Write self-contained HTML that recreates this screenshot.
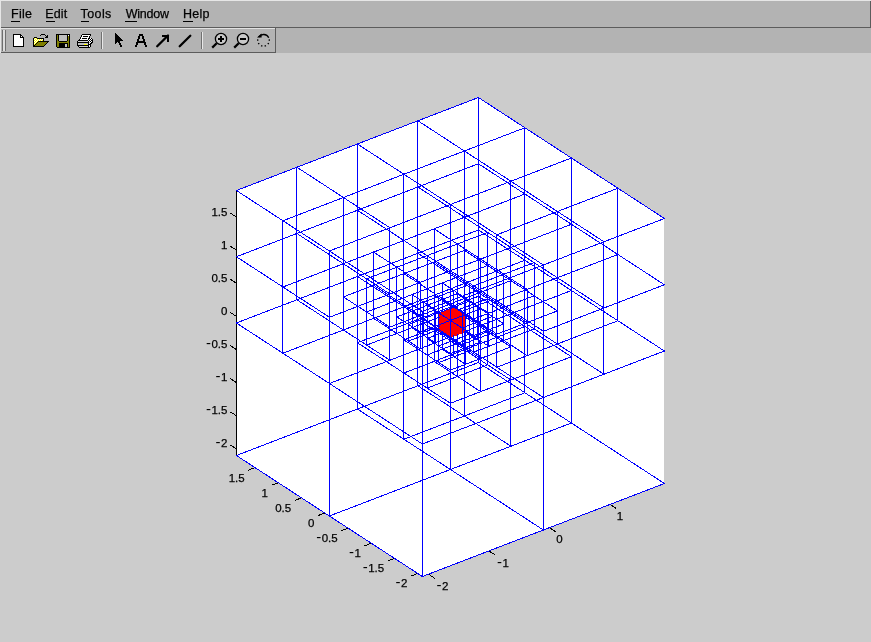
<!DOCTYPE html><html><head><meta charset="utf-8"><title>Figure</title><style>
html,body{margin:0;padding:0}
body{width:871px;height:642px;background:#cccccc;position:relative;overflow:hidden;font-family:"Liberation Sans",sans-serif}
svg{position:absolute;left:0;top:0}
.m{font-size:12.5px;fill:#000;stroke:#000;stroke-width:.25px}text{filter:grayscale(1)}.t{font-size:11.5px;fill:#000;stroke:#000;stroke-width:.25px}
</style></head><body>
<svg width="871" height="642" viewBox="0 0 871 642">
<g shape-rendering="crispEdges">
<rect x="0" y="0" width="871" height="53" fill="#b3b3b3"/>
<rect x="0" y="0" width="871" height="1" fill="#e6e6e6"/>
<rect x="0" y="0" width="1" height="53" fill="#e6e6e6"/>
<rect x="1" y="27" width="870" height="1" fill="#5c5c5c"/>
<rect x="870" y="1" width="1" height="27" fill="#5c5c5c"/>
<rect x="1" y="28" width="275" height="1" fill="#e0e0e0"/>
<rect x="1" y="52" width="275" height="1" fill="#5c5c5c"/>
<rect x="275" y="28" width="1" height="25" fill="#5c5c5c"/>
<rect x="2" y="30" width="1" height="21" fill="#6e6e6e"/>
<rect x="3" y="30" width="2" height="21" fill="#dcdcdc"/>
<rect x="5" y="30" width="1" height="21" fill="#6e6e6e"/>
<rect x="101" y="32" width="1" height="17" fill="#707070"/>
<rect x="102" y="32" width="1" height="17" fill="#e8e8e8"/>
<rect x="201" y="32" width="1" height="17" fill="#707070"/>
<rect x="202" y="32" width="1" height="17" fill="#e8e8e8"/>
<rect x="11" y="21" width="9" height="1" fill="#000"/>
<rect x="46" y="21" width="9" height="1" fill="#000"/>
<rect x="81" y="21" width="8" height="1" fill="#000"/>
<rect x="125" y="21" width="12" height="1" fill="#000"/>
<rect x="183" y="21" width="10" height="1" fill="#000"/>
<rect x="13" y="34" width="8" height="1" fill="#000"/><rect x="13" y="35" width="1" height="1" fill="#000"/><rect x="14" y="35" width="6" height="1" fill="#fff"/><rect x="20" y="35" width="2" height="1" fill="#000"/><rect x="13" y="36" width="1" height="1" fill="#000"/><rect x="14" y="36" width="6" height="1" fill="#fff"/><rect x="20" y="36" width="1" height="1" fill="#000"/><rect x="21" y="36" width="1" height="1" fill="#fff"/><rect x="22" y="36" width="1" height="1" fill="#000"/><rect x="13" y="37" width="1" height="1" fill="#000"/><rect x="14" y="37" width="6" height="1" fill="#fff"/><rect x="20" y="37" width="4" height="1" fill="#000"/><rect x="13" y="38" width="1" height="1" fill="#000"/><rect x="14" y="38" width="9" height="1" fill="#fff"/><rect x="23" y="38" width="1" height="1" fill="#000"/><rect x="13" y="39" width="1" height="1" fill="#000"/><rect x="14" y="39" width="9" height="1" fill="#fff"/><rect x="23" y="39" width="1" height="1" fill="#000"/><rect x="13" y="40" width="1" height="1" fill="#000"/><rect x="14" y="40" width="9" height="1" fill="#fff"/><rect x="23" y="40" width="1" height="1" fill="#000"/><rect x="13" y="41" width="1" height="1" fill="#000"/><rect x="14" y="41" width="9" height="1" fill="#fff"/><rect x="23" y="41" width="1" height="1" fill="#000"/><rect x="13" y="42" width="1" height="1" fill="#000"/><rect x="14" y="42" width="9" height="1" fill="#fff"/><rect x="23" y="42" width="1" height="1" fill="#000"/><rect x="13" y="43" width="1" height="1" fill="#000"/><rect x="14" y="43" width="9" height="1" fill="#fff"/><rect x="23" y="43" width="1" height="1" fill="#000"/><rect x="13" y="44" width="1" height="1" fill="#000"/><rect x="14" y="44" width="9" height="1" fill="#fff"/><rect x="23" y="44" width="1" height="1" fill="#000"/><rect x="13" y="45" width="1" height="1" fill="#000"/><rect x="14" y="45" width="9" height="1" fill="#fff"/><rect x="23" y="45" width="1" height="1" fill="#000"/><rect x="13" y="46" width="11" height="1" fill="#000"/>
<rect x="41" y="34" width="4" height="1" fill="#000"/><rect x="40" y="35" width="1" height="1" fill="#000"/><rect x="45" y="35" width="1" height="1" fill="#000"/><rect x="47" y="35" width="1" height="1" fill="#000"/><rect x="46" y="36" width="2" height="1" fill="#000"/><rect x="34" y="37" width="3" height="1" fill="#000"/><rect x="45" y="37" width="3" height="1" fill="#000"/><rect x="33" y="38" width="1" height="1" fill="#000"/><rect x="34" y="38" width="1" height="1" fill="#ffff00"/><rect x="35" y="38" width="1" height="1" fill="#fff"/><rect x="36" y="38" width="1" height="1" fill="#ffff00"/><rect x="37" y="38" width="7" height="1" fill="#000"/><rect x="33" y="39" width="1" height="1" fill="#000"/><rect x="34" y="39" width="1" height="1" fill="#fff"/><rect x="35" y="39" width="1" height="1" fill="#ffff00"/><rect x="36" y="39" width="1" height="1" fill="#fff"/><rect x="37" y="39" width="1" height="1" fill="#ffff00"/><rect x="38" y="39" width="1" height="1" fill="#fff"/><rect x="39" y="39" width="1" height="1" fill="#ffff00"/><rect x="40" y="39" width="1" height="1" fill="#fff"/><rect x="41" y="39" width="1" height="1" fill="#ffff00"/><rect x="42" y="39" width="1" height="1" fill="#fff"/><rect x="43" y="39" width="1" height="1" fill="#000"/><rect x="33" y="40" width="1" height="1" fill="#000"/><rect x="34" y="40" width="1" height="1" fill="#ffff00"/><rect x="35" y="40" width="1" height="1" fill="#fff"/><rect x="36" y="40" width="1" height="1" fill="#ffff00"/><rect x="37" y="40" width="1" height="1" fill="#fff"/><rect x="38" y="40" width="1" height="1" fill="#ffff00"/><rect x="39" y="40" width="1" height="1" fill="#fff"/><rect x="40" y="40" width="1" height="1" fill="#ffff00"/><rect x="41" y="40" width="1" height="1" fill="#fff"/><rect x="42" y="40" width="1" height="1" fill="#ffff00"/><rect x="43" y="40" width="1" height="1" fill="#000"/><rect x="33" y="41" width="1" height="1" fill="#000"/><rect x="34" y="41" width="1" height="1" fill="#fff"/><rect x="35" y="41" width="1" height="1" fill="#ffff00"/><rect x="36" y="41" width="1" height="1" fill="#fff"/><rect x="37" y="41" width="1" height="1" fill="#ffff00"/><rect x="38" y="41" width="11" height="1" fill="#000"/><rect x="33" y="42" width="1" height="1" fill="#000"/><rect x="34" y="42" width="1" height="1" fill="#ffff00"/><rect x="35" y="42" width="1" height="1" fill="#fff"/><rect x="36" y="42" width="1" height="1" fill="#ffff00"/><rect x="37" y="42" width="1" height="1" fill="#000"/><rect x="38" y="42" width="9" height="1" fill="#808000"/><rect x="47" y="42" width="1" height="1" fill="#000"/><rect x="33" y="43" width="1" height="1" fill="#000"/><rect x="34" y="43" width="1" height="1" fill="#fff"/><rect x="35" y="43" width="1" height="1" fill="#ffff00"/><rect x="36" y="43" width="1" height="1" fill="#000"/><rect x="37" y="43" width="9" height="1" fill="#808000"/><rect x="46" y="43" width="1" height="1" fill="#000"/><rect x="33" y="44" width="1" height="1" fill="#000"/><rect x="34" y="44" width="1" height="1" fill="#ffff00"/><rect x="35" y="44" width="1" height="1" fill="#000"/><rect x="36" y="44" width="9" height="1" fill="#808000"/><rect x="45" y="44" width="1" height="1" fill="#000"/><rect x="33" y="45" width="2" height="1" fill="#000"/><rect x="35" y="45" width="9" height="1" fill="#808000"/><rect x="44" y="45" width="1" height="1" fill="#000"/><rect x="33" y="46" width="11" height="1" fill="#000"/>
<rect x="56" y="34" width="14" height="1" fill="#000"/><rect x="56" y="35" width="1" height="1" fill="#000"/><rect x="57" y="35" width="1" height="1" fill="#808000"/><rect x="58" y="35" width="1" height="1" fill="#000"/><rect x="59" y="35" width="8" height="1" fill="#c0c0c0"/><rect x="67" y="35" width="1" height="1" fill="#000"/><rect x="68" y="35" width="1" height="1" fill="#fff"/><rect x="69" y="35" width="1" height="1" fill="#000"/><rect x="56" y="36" width="1" height="1" fill="#000"/><rect x="57" y="36" width="1" height="1" fill="#808000"/><rect x="58" y="36" width="1" height="1" fill="#000"/><rect x="59" y="36" width="8" height="1" fill="#c0c0c0"/><rect x="67" y="36" width="1" height="1" fill="#000"/><rect x="68" y="36" width="1" height="1" fill="#808000"/><rect x="69" y="36" width="1" height="1" fill="#000"/><rect x="56" y="37" width="1" height="1" fill="#000"/><rect x="57" y="37" width="1" height="1" fill="#808000"/><rect x="58" y="37" width="1" height="1" fill="#000"/><rect x="59" y="37" width="8" height="1" fill="#c0c0c0"/><rect x="67" y="37" width="1" height="1" fill="#000"/><rect x="68" y="37" width="1" height="1" fill="#808000"/><rect x="69" y="37" width="1" height="1" fill="#000"/><rect x="56" y="38" width="1" height="1" fill="#000"/><rect x="57" y="38" width="1" height="1" fill="#808000"/><rect x="58" y="38" width="1" height="1" fill="#000"/><rect x="59" y="38" width="8" height="1" fill="#c0c0c0"/><rect x="67" y="38" width="1" height="1" fill="#000"/><rect x="68" y="38" width="1" height="1" fill="#808000"/><rect x="69" y="38" width="1" height="1" fill="#000"/><rect x="56" y="39" width="1" height="1" fill="#000"/><rect x="57" y="39" width="1" height="1" fill="#808000"/><rect x="58" y="39" width="1" height="1" fill="#000"/><rect x="59" y="39" width="8" height="1" fill="#c0c0c0"/><rect x="67" y="39" width="1" height="1" fill="#000"/><rect x="68" y="39" width="1" height="1" fill="#808000"/><rect x="69" y="39" width="1" height="1" fill="#000"/><rect x="56" y="40" width="1" height="1" fill="#000"/><rect x="57" y="40" width="1" height="1" fill="#808000"/><rect x="58" y="40" width="1" height="1" fill="#000"/><rect x="59" y="40" width="8" height="1" fill="#c0c0c0"/><rect x="67" y="40" width="1" height="1" fill="#000"/><rect x="68" y="40" width="1" height="1" fill="#808000"/><rect x="69" y="40" width="1" height="1" fill="#000"/><rect x="56" y="41" width="1" height="1" fill="#000"/><rect x="57" y="41" width="2" height="1" fill="#808000"/><rect x="59" y="41" width="8" height="1" fill="#000"/><rect x="67" y="41" width="2" height="1" fill="#808000"/><rect x="69" y="41" width="1" height="1" fill="#000"/><rect x="56" y="42" width="1" height="1" fill="#000"/><rect x="57" y="42" width="12" height="1" fill="#808000"/><rect x="69" y="42" width="1" height="1" fill="#000"/><rect x="56" y="43" width="1" height="1" fill="#000"/><rect x="57" y="43" width="2" height="1" fill="#808000"/><rect x="59" y="43" width="9" height="1" fill="#000"/><rect x="68" y="43" width="1" height="1" fill="#808000"/><rect x="69" y="43" width="1" height="1" fill="#000"/><rect x="56" y="44" width="1" height="1" fill="#000"/><rect x="57" y="44" width="2" height="1" fill="#808000"/><rect x="59" y="44" width="6" height="1" fill="#000"/><rect x="65" y="44" width="2" height="1" fill="#c0c0c0"/><rect x="67" y="44" width="1" height="1" fill="#000"/><rect x="68" y="44" width="1" height="1" fill="#808000"/><rect x="69" y="44" width="1" height="1" fill="#000"/><rect x="56" y="45" width="1" height="1" fill="#000"/><rect x="57" y="45" width="2" height="1" fill="#808000"/><rect x="59" y="45" width="6" height="1" fill="#000"/><rect x="65" y="45" width="2" height="1" fill="#c0c0c0"/><rect x="67" y="45" width="1" height="1" fill="#000"/><rect x="68" y="45" width="1" height="1" fill="#808000"/><rect x="69" y="45" width="1" height="1" fill="#000"/><rect x="56" y="46" width="1" height="1" fill="#000"/><rect x="57" y="46" width="2" height="1" fill="#808000"/><rect x="59" y="46" width="6" height="1" fill="#000"/><rect x="65" y="46" width="2" height="1" fill="#c0c0c0"/><rect x="67" y="46" width="1" height="1" fill="#000"/><rect x="68" y="46" width="1" height="1" fill="#808000"/><rect x="69" y="46" width="1" height="1" fill="#000"/><rect x="57" y="47" width="13" height="1" fill="#000"/>
<rect x="82" y="34" width="9" height="1" fill="#000"/><rect x="81" y="35" width="1" height="1" fill="#000"/><rect x="82" y="35" width="8" height="1" fill="#fff"/><rect x="90" y="35" width="1" height="1" fill="#000"/><rect x="81" y="36" width="1" height="1" fill="#000"/><rect x="82" y="36" width="1" height="1" fill="#fff"/><rect x="83" y="36" width="5" height="1" fill="#000"/><rect x="88" y="36" width="1" height="1" fill="#fff"/><rect x="89" y="36" width="1" height="1" fill="#000"/><rect x="80" y="37" width="1" height="1" fill="#000"/><rect x="81" y="37" width="8" height="1" fill="#fff"/><rect x="89" y="37" width="1" height="1" fill="#000"/><rect x="80" y="38" width="1" height="1" fill="#000"/><rect x="81" y="38" width="1" height="1" fill="#fff"/><rect x="82" y="38" width="5" height="1" fill="#000"/><rect x="87" y="38" width="1" height="1" fill="#fff"/><rect x="88" y="38" width="2" height="1" fill="#000"/><rect x="90" y="38" width="1" height="1" fill="#fff"/><rect x="91" y="38" width="1" height="1" fill="#000"/><rect x="79" y="39" width="1" height="1" fill="#000"/><rect x="80" y="39" width="8" height="1" fill="#fff"/><rect x="88" y="39" width="1" height="1" fill="#000"/><rect x="89" y="39" width="1" height="1" fill="#fff"/><rect x="90" y="39" width="1" height="1" fill="#000"/><rect x="91" y="39" width="1" height="1" fill="#fff"/><rect x="92" y="39" width="1" height="1" fill="#000"/><rect x="78" y="40" width="10" height="1" fill="#000"/><rect x="88" y="40" width="1" height="1" fill="#fff"/><rect x="89" y="40" width="1" height="1" fill="#000"/><rect x="90" y="40" width="1" height="1" fill="#fff"/><rect x="91" y="40" width="2" height="1" fill="#000"/><rect x="77" y="41" width="1" height="1" fill="#000"/><rect x="78" y="41" width="10" height="1" fill="#d4d4d4"/><rect x="88" y="41" width="1" height="1" fill="#000"/><rect x="89" y="41" width="1" height="1" fill="#fff"/><rect x="90" y="41" width="1" height="1" fill="#000"/><rect x="91" y="41" width="1" height="1" fill="#fff"/><rect x="92" y="41" width="1" height="1" fill="#000"/><rect x="77" y="42" width="12" height="1" fill="#000"/><rect x="90" y="42" width="1" height="1" fill="#fff"/><rect x="91" y="42" width="2" height="1" fill="#000"/><rect x="77" y="43" width="1" height="1" fill="#000"/><rect x="78" y="43" width="10" height="1" fill="#c0c0c0"/><rect x="88" y="43" width="1" height="1" fill="#000"/><rect x="89" y="43" width="1" height="1" fill="#fff"/><rect x="90" y="43" width="2" height="1" fill="#000"/><rect x="77" y="44" width="1" height="1" fill="#000"/><rect x="78" y="44" width="6" height="1" fill="#c0c0c0"/><rect x="84" y="44" width="3" height="1" fill="#ffff00"/><rect x="87" y="44" width="1" height="1" fill="#c0c0c0"/><rect x="88" y="44" width="3" height="1" fill="#000"/><rect x="77" y="45" width="12" height="1" fill="#000"/><rect x="89" y="45" width="1" height="1" fill="#fff"/><rect x="90" y="45" width="1" height="1" fill="#000"/><rect x="78" y="46" width="1" height="1" fill="#000"/><rect x="79" y="46" width="9" height="1" fill="#d4d4d4"/><rect x="88" y="46" width="1" height="1" fill="#000"/><rect x="89" y="46" width="1" height="1" fill="#fff"/><rect x="90" y="46" width="1" height="1" fill="#000"/><rect x="79" y="47" width="11" height="1" fill="#000"/>
<rect x="115" y="33" width="1" height="1" fill="#000"/><rect x="115" y="34" width="2" height="1" fill="#000"/><rect x="115" y="35" width="3" height="1" fill="#000"/><rect x="115" y="36" width="4" height="1" fill="#000"/><rect x="115" y="37" width="5" height="1" fill="#000"/><rect x="115" y="38" width="6" height="1" fill="#000"/><rect x="115" y="39" width="7" height="1" fill="#000"/><rect x="115" y="40" width="8" height="1" fill="#000"/><rect x="115" y="41" width="5" height="1" fill="#000"/><rect x="115" y="42" width="2" height="1" fill="#000"/><rect x="118" y="42" width="2" height="1" fill="#000"/><rect x="115" y="43" width="1" height="1" fill="#000"/><rect x="119" y="43" width="2" height="1" fill="#000"/><rect x="119" y="44" width="2" height="1" fill="#000"/><rect x="120" y="45" width="2" height="1" fill="#000"/><rect x="120" y="46" width="2" height="1" fill="#000"/>
<rect x="139" y="34" width="4" height="1" fill="#000"/><rect x="139" y="35" width="4" height="1" fill="#000"/><rect x="138" y="36" width="2" height="1" fill="#000"/><rect x="142" y="36" width="2" height="1" fill="#000"/><rect x="138" y="37" width="2" height="1" fill="#000"/><rect x="142" y="37" width="2" height="1" fill="#000"/><rect x="138" y="38" width="2" height="1" fill="#000"/><rect x="142" y="38" width="2" height="1" fill="#000"/><rect x="137" y="39" width="2" height="1" fill="#000"/><rect x="143" y="39" width="2" height="1" fill="#000"/><rect x="137" y="40" width="2" height="1" fill="#000"/><rect x="143" y="40" width="2" height="1" fill="#000"/><rect x="137" y="41" width="8" height="1" fill="#000"/><rect x="136" y="42" width="10" height="1" fill="#000"/><rect x="136" y="43" width="2" height="1" fill="#000"/><rect x="144" y="43" width="2" height="1" fill="#000"/><rect x="136" y="44" width="2" height="1" fill="#000"/><rect x="144" y="44" width="2" height="1" fill="#000"/><rect x="135" y="45" width="2" height="1" fill="#000"/><rect x="145" y="45" width="2" height="1" fill="#000"/><rect x="135" y="46" width="2" height="1" fill="#000"/><rect x="145" y="46" width="2" height="1" fill="#000"/>
<path d="M157.2 46.3L168 35.5" stroke="#000" stroke-width="2.3" stroke-linecap="round" fill="none" shape-rendering="auto"/>
<rect x="162" y="35" width="7" height="2" fill="#000"/><rect x="167" y="35" width="2" height="7" fill="#000"/>
<path d="M179.7 46.3L190.3 35.7" stroke="#000" stroke-width="2.3" stroke-linecap="round" fill="none" shape-rendering="auto"/>
</g>
<circle cx="221" cy="39" r="5.6" fill="#c8c8c8" stroke="#000" stroke-width="1.3"/>
<path d="M216.7 43.2L212.2 47.6" stroke="#000" stroke-width="2.2"/>
<rect x="218" y="38" width="6" height="2" fill="#000"/>
<rect x="220" y="36" width="2" height="6" fill="#000"/>
<circle cx="243" cy="39" r="5.6" fill="#c8c8c8" stroke="#000" stroke-width="1.3"/>
<path d="M238.7 43.2L234.2 47.6" stroke="#000" stroke-width="2.2"/>
<rect x="240" y="38" width="6" height="2" fill="#000"/>
<path d="M258.75 36.97A5.8 5.8 0 0 1 268.76 37.85" fill="none" stroke="#000" stroke-width="1.3"/>
<path d="M268.76 37.85A5.8 5.8 0 1 1 258.75 36.97" fill="none" stroke="#000" stroke-width="1.4" stroke-dasharray="1.3 2.4" stroke-dashoffset="-1.6"/>
<path d="M257 37.6L261.6 33.4L261.6 37.6Z" fill="#000"/>
<text class="m" x="11.0" y="18" letter-spacing="0.3">File</text>
<text class="m" x="45.3" y="18" letter-spacing="0.1">Edit</text>
<text class="m" x="80.6" y="18" letter-spacing="0.4">Tools</text>
<text class="m" x="125.7" y="18" letter-spacing="-0.2">Window</text>
<text class="m" x="183.0" y="18" letter-spacing="0.25">Help</text>
<g shape-rendering="crispEdges">
<polygon points="236.40,190.50 478.40,97.50 664.40,218.50 664.40,483.50 422.40,576.50 236.40,455.50" fill="#fff"/>
<path d="M236.40 455.50L236.40 190.50M236.40 455.50L422.40 576.50M422.40 576.50L664.40 483.50M236.40 217.00L230.35 213.07M236.40 250.12L230.35 246.19M236.40 283.25L230.35 279.32M236.40 316.38L230.35 312.44M236.40 349.50L230.35 345.57M236.40 382.62L230.35 378.69M236.40 415.75L230.35 411.82M236.40 448.88L230.35 444.94M255.00 467.60L248.34 470.16M278.25 482.73L271.60 485.28M301.50 497.85L294.85 500.41M324.75 512.98L318.10 515.53M348.00 528.10L341.35 530.66M371.25 543.23L364.60 545.78M394.50 558.35L387.85 560.91M417.75 573.48L411.10 576.03M428.45 574.17L434.73 578.26M488.95 550.92L495.23 555.01M549.45 527.67L555.73 531.76M609.95 504.43L616.23 508.51" stroke="#000" stroke-width="1" fill="none"/>
<polygon points="438.77,312.88 453.90,307.06 465.52,314.62 465.52,332.19 450.40,338.00 438.77,330.44" fill="#f00"/>
<path d="M422.4 576.5L664.4 483.5M329.4 516L571.4 423M422.4 576.5L236.4 455.5M543.4 530L357.4 409M422.4 444L664.4 351M329.4 383.5L450.4 337M465.65 331.14L571.4 290.5M422.4 444L236.4 323M543.4 397.5L357.4 276.5M422.4 576.5L422.4 311.5M450.4 469.5L450.4 204.5M664.4 483.5L478.4 362.5M664.4 351L478.4 230M543.4 530L543.4 265M571.4 423L571.4 158M236.4 455.5L478.4 362.5M236.4 323L478.4 230M329.4 516L329.4 251M357.4 409L357.4 144M478.4 362.5L478.4 97.5M422.4 311.5L664.4 218.5M329.4 251L571.4 158M422.4 311.5L236.4 190.5M543.4 265L357.4 144M664.4 218.5L478.4 97.5M236.4 190.5L478.4 97.5M282.9 353.25L524.9 260.25M389.9 360.25L296.9 299.75M329.4 317.25L571.4 224.25M282.9 287L524.9 194M329.4 317.25L236.4 256.75M389.9 294L296.9 233.5M343.4 330L343.4 197.5M543.4 331.25L357.4 210.25M389.9 360.25L389.9 227.75M403.9 439.25L403.9 174.25M236.4 256.75L478.4 163.75M282.9 353.25L282.9 220.75M296.9 299.75L296.9 167.25M282.9 220.75L524.9 127.75M389.9 227.75L296.9 167.25M496.9 367.25L617.9 320.75M603.9 374.25L417.9 253.25M543.4 331.25L664.4 284.75M496.9 301L617.9 254.5M603.9 308L417.9 187M557.4 344L557.4 211.5M664.4 284.75L478.4 163.75M603.9 374.25L603.9 241.75M617.9 320.75L617.9 188.25M496.9 367.25L496.9 234.75M510.9 446.25L510.9 181.25M496.9 234.75L617.9 188.25M603.9 241.75L417.9 120.75M464.4 416L464.4 331.47M464.4 314.5L464.4 151M524.9 392.75L524.9 127.75M417.9 385.75L417.9 120.75M403.9 439.25L524.9 392.75M510.9 446.25L417.9 385.75M450.4 403.25L571.4 356.75M403.9 373L524.9 326.5M450.4 403.25L357.4 342.75M510.9 380L417.9 319.5M571.4 356.75L478.4 296.25M357.4 342.75L478.4 296.25M366.65 345.12L439.01 317.32M457.88 310.06L487.65 298.62M420.15 348.62L373.65 318.38M389.9 327.12L510.9 280.62M366.65 312L487.65 265.5M389.9 327.12L343.4 296.88M420.15 315.5L373.65 285.25M396.9 333.5L396.9 267.25M496.9 334.12L403.9 273.62M420.15 348.62L420.15 282.38M427.15 388.12L427.15 255.62M343.4 296.88L464.4 250.38M366.65 345.12L366.65 278.88M373.65 318.38L373.65 252.12M366.65 278.88L487.65 232.38M420.15 282.38L373.65 252.12M473.65 352.12L534.15 328.88M527.15 355.62L465.21 315.33M453.31 307.59L434.15 295.12M496.9 334.12L557.4 310.88M473.65 319L534.15 295.75M527.15 322.5L434.15 262M503.9 340.5L503.9 274.25M557.4 310.88L464.4 250.38M527.15 355.62L527.15 289.38M534.15 328.88L534.15 262.62M473.65 352.12L473.65 285.88M480.65 391.62L480.65 259.12M473.65 285.88L534.15 262.62M527.15 289.38L434.15 228.88M457.4 376.5L457.4 334.1M457.4 309.72L457.4 244M487.65 364.88L487.65 232.38M434.15 361.38L434.15 228.88M427.15 388.12L487.65 364.88M480.65 391.62L434.15 361.38M450.4 370.12L510.9 346.88M427.15 355L487.65 331.75M450.4 370.12L403.9 339.88M480.65 358.5L434.15 328.25M510.9 346.88L465.14 317.11M403.9 339.88L438.99 326.39M408.52 341.06L439.26 329.25M465.15 319.3L469.02 317.81M435.27 342.81L412.02 327.69M420.15 332.06L480.65 308.81M408.52 324.5L469.02 301.25M420.15 332.06L396.9 316.94M435.27 326.25L412.02 311.12M423.65 335.25L423.65 302.12M473.65 335.56L427.15 305.31M435.27 342.81L435.27 309.69M438.77 362.56L438.77 296.31M396.9 316.94L457.4 293.69M408.52 341.06L408.52 307.94M412.02 327.69L412.02 294.56M408.52 307.94L469.02 284.69M435.27 309.69L412.02 294.56M462.02 344.56L492.27 332.94M488.77 346.31L465.15 330.95M473.65 335.56L503.9 323.94M462.02 328L492.27 316.38M488.77 329.75L442.27 299.5M477.15 338.75L477.15 305.62M503.9 323.94L457.4 293.69M488.77 346.31L488.77 313.19M492.27 332.94L492.27 299.81M462.02 344.56L462.02 311.44M465.52 364.31L465.52 298.06M462.02 311.44L492.27 299.81M488.77 313.19L442.27 282.94M453.9 356.75L453.9 335.28M453.9 307.46L453.9 290.5M469.02 350.94L469.02 284.69M442.27 349.19L442.27 331.43M442.27 311.82L442.27 282.94M438.77 362.56L469.02 350.94M465.52 364.31L442.27 349.19M450.4 353.56L480.65 341.94M438.77 346L469.02 334.38M450.4 353.56L427.15 338.44M465.52 347.75L442.27 332.62M480.65 341.94L464.28 331.29M427.15 338.44L443.36 332.21" stroke="#00f" stroke-width="1" stroke-linecap="square" fill="none"/>
</g>
<text class="t" x="227.4" y="215.5" text-anchor="end">1.5</text>
<text class="t" x="227.4" y="248.6" text-anchor="end">1</text>
<text class="t" x="227.4" y="281.7" text-anchor="end">0.5</text>
<text class="t" x="227.4" y="314.8" text-anchor="end">0</text>
<text class="t" x="227.4" y="348.0" text-anchor="end"><tspan font-size="15" stroke-width="0">-</tspan><tspan dx="0.5">0.5</tspan></text>
<text class="t" x="227.4" y="381.1" text-anchor="end"><tspan font-size="15" stroke-width="0">-</tspan><tspan dx="0.5">1</tspan></text>
<text class="t" x="227.4" y="414.2" text-anchor="end"><tspan font-size="15" stroke-width="0">-</tspan><tspan dx="0.5">1.5</tspan></text>
<text class="t" x="227.4" y="447.3" text-anchor="end"><tspan font-size="15" stroke-width="0">-</tspan><tspan dx="0.5">2</tspan></text>
<text class="t" x="244.7" y="481.7" text-anchor="end">1.5</text>
<text class="t" x="268.0" y="496.8" text-anchor="end">1</text>
<text class="t" x="291.2" y="511.9" text-anchor="end">0.5</text>
<text class="t" x="314.5" y="527.0" text-anchor="end">0</text>
<text class="t" x="337.7" y="541.5" text-anchor="end"><tspan font-size="15" stroke-width="0">-</tspan><tspan dx="0.5">0.5</tspan></text>
<text class="t" x="361.0" y="556.6" text-anchor="end"><tspan font-size="15" stroke-width="0">-</tspan><tspan dx="0.5">1</tspan></text>
<text class="t" x="384.2" y="571.7" text-anchor="end"><tspan font-size="15" stroke-width="0">-</tspan><tspan dx="0.5">1.5</tspan></text>
<text class="t" x="407.5" y="586.8" text-anchor="end"><tspan font-size="15" stroke-width="0">-</tspan><tspan dx="0.5">2</tspan></text>
<text class="t" x="436.4" y="589.8" text-anchor="start"><tspan font-size="15" stroke-width="0">-</tspan><tspan dx="0.5">2</tspan></text>
<text class="t" x="496.9" y="566.5" text-anchor="start"><tspan font-size="15" stroke-width="0">-</tspan><tspan dx="0.5">1</tspan></text>
<text class="t" x="556.2" y="543.1" text-anchor="start">0</text>
<text class="t" x="616.7" y="519.8" text-anchor="start">1</text>
</svg></body></html>
